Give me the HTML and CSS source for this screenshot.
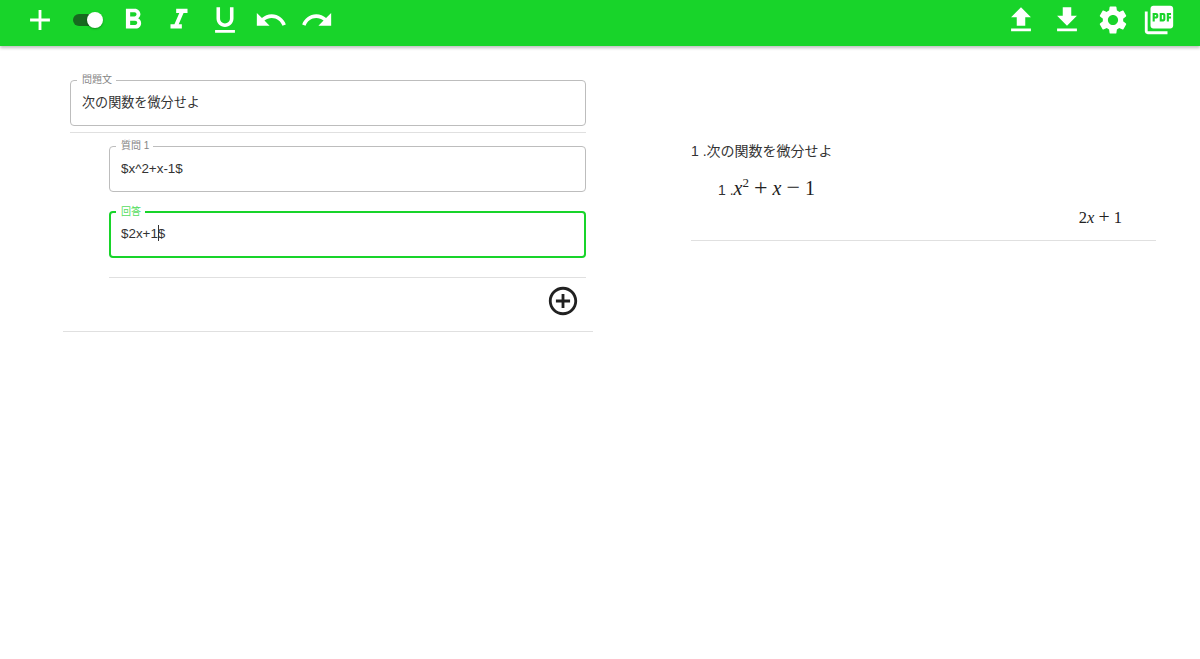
FILE: index.html
```html
<!DOCTYPE html>
<html lang="ja">
<head>
<meta charset="utf-8">
<title>問題エディタ</title>
<link rel="stylesheet" href="styles.css">
</head>
<body>
<header class="toolbar">
  <div class="tool-group">
    <button class="icon-btn"><svg viewBox="0 0 24 24"><path d="M19 13h-6v6h-2v-6H5v-2h6V5h2v6h6v2z"/></svg></button>
    <span class="switch"><span class="switch-track"></span><span class="switch-thumb"></span></span>
    <button class="icon-btn"><svg viewBox="0 0 24 24"><path d="M15.6 10.79c.97-.67 1.65-1.77 1.65-2.79 0-2.26-1.75-4-4-4H7v14h7.04c2.09 0 3.71-1.7 3.71-3.79 0-1.52-.86-2.82-2.15-3.42zM10 6.5h3c.83 0 1.5.67 1.5 1.5s-.67 1.5-1.5 1.5h-3v-3zm3.5 9H10v-3h3.5c.83 0 1.5.67 1.5 1.5s-.67 1.5-1.5 1.5z"/></svg></button>
    <button class="icon-btn"><svg viewBox="0 0 24 24"><path d="M10 4v3h2.21l-3.42 8H6v3h8v-3h-2.21l3.42-8H18V4z"/></svg></button>
    <button class="icon-btn"><svg viewBox="0 0 24 24"><path d="M12 17c3.31 0 6-2.69 6-6V3h-2.5v8c0 1.93-1.57 3.5-3.5 3.5S8.5 12.93 8.5 11V3H6v8c0 3.31 2.69 6 6 6zm-7 2v2h14v-2H5z"/></svg></button>
    <button class="icon-btn"><svg viewBox="0 0 24 24"><path d="M12.5 8c-2.65 0-5.05.99-6.9 2.6L2 7v9h9l-3.62-3.62c1.39-1.16 3.16-1.88 5.12-1.88 3.54 0 6.55 2.31 7.6 5.5l2.37-.78C21.08 11.03 17.15 8 12.5 8z"/></svg></button>
    <button class="icon-btn"><svg viewBox="0 0 24 24"><path d="M18.4 10.6C16.55 8.99 14.15 8 11.5 8c-4.65 0-8.58 3.03-9.96 7.22L3.9 16c1.05-3.19 4.05-5.5 7.6-5.5 1.95 0 3.73.72 5.12 1.88L13 16h9V7l-3.6 3.6z"/></svg></button>
  </div>
  <div class="tool-group">
    <button class="icon-btn"><svg viewBox="0 0 24 24"><path d="M9 16h6v-6h4l-7-7-7 7h4zm-4 2h14v2H5z"/></svg></button>
    <button class="icon-btn"><svg viewBox="0 0 24 24"><path d="M19 9h-4V3H9v6H5l7 7 7-7zM5 18v2h14v-2H5z"/></svg></button>
    <button class="icon-btn"><svg viewBox="0 0 24 24"><path d="M19.14 12.94c.04-.3.06-.61.06-.94 0-.32-.02-.64-.07-.94l2.03-1.58c.18-.14.23-.41.12-.61l-1.92-3.32c-.12-.22-.37-.29-.59-.22l-2.39.96c-.5-.38-1.03-.7-1.62-.94l-.36-2.54c-.04-.24-.24-.41-.48-.41h-3.84c-.24 0-.43.17-.47.41l-.36 2.54c-.59.24-1.13.57-1.62.94l-2.39-.96c-.22-.08-.47 0-.59.22L2.74 8.87c-.12.21-.08.47.12.61l2.03 1.58c-.05.3-.09.63-.09.94s.02.64.07.94l-2.03 1.58c-.18.14-.23.41-.12.61l1.92 3.32c.12.22.37.29.59.22l2.39-.96c.5.38 1.03.7 1.62.94l.36 2.54c.05.24.24.41.48.41h3.84c.24 0 .44-.17.47-.41l.36-2.54c.59-.24 1.13-.56 1.62-.94l2.39.96c.22.08.47 0 .59-.22l1.92-3.32c.12-.22.07-.47-.12-.61l-2.01-1.58zM12 15.6c-1.98 0-3.6-1.62-3.6-3.6s1.62-3.6 3.6-3.6 3.6 1.62 3.6 3.6-1.62 3.6-3.6 3.6z"/></svg></button>
    <button class="icon-btn"><svg viewBox="0 0 24 24"><path d="M20 2H8c-1.1 0-2 .9-2 2v12c0 1.1.9 2 2 2h12c1.1 0 2-.9 2-2V4c0-1.1-.9-2-2-2zm-8.5 7.5c0 .83-.67 1.5-1.5 1.5H9v2H7.5V7H10c.83 0 1.5.67 1.5 1.5v1zm5 2c0 .83-.67 1.5-1.5 1.5h-2.5V7H15c.83 0 1.5.67 1.5 1.5v3zm4-3H19v1h1.5V11H19v2h-1.5V7h3v1.5zM9 9.5h1v-1H9v1zM4 6H2v14c0 1.1.9 2 2 2h14v-2H4V6zm10 5.5h1v-3h-1v3z"/></svg></button>
  </div>
</header>
<main class="page">
  <section class="editor">
    <fieldset class="field">
      <legend>問題文</legend>
      <div class="field-value value-ja">次の関数を微分せよ</div>
    </fieldset>
    <hr class="rule rule-top">
    <div class="sub">
      <fieldset class="field">
        <legend>質問 1</legend>
        <div class="field-value">$x^2+x-1$</div>
      </fieldset>
      <fieldset class="field field-focus">
        <legend>回答</legend>
        <div class="field-value">$2x+1<span class="caret"></span>$</div>
      </fieldset>
      <hr class="rule rule-sub">
      <div class="add-row">
        <button class="icon-btn icon-dark"><svg viewBox="0 0 24 24"><path d="M13 7h-2v4H7v2h4v4h2v-4h4v-2h-4V7zm-1-5C6.48 2 2 6.48 2 12s4.48 10 10 10 10-4.48 10-10S17.52 2 12 2zm0 18c-4.41 0-8-3.59-8-8s3.59-8 8-8 8 3.59 8 8-3.59 8-8 8z"/></svg></button>
      </div>
    </div>
  </section>
  <section class="preview">
    <p class="q-title">1 .次の関数を微分せよ</p>
    <p class="q-sub">1 .<span class="math math-lg"><i>x</i><sup>2</sup> <span class="op">+</span> <i>x</i> <span class="op">−</span> 1</span></p>
    <p class="q-answer"><span class="math">2<i>x</i> <span class="op">+</span> 1</span></p>
  </section>
</main>
</body>
</html>
```
FILE: styles.css
```css
* { box-sizing: border-box; }
html, body { margin: 0; padding: 0; height: 100%; background: #fff; }
body {
  font-family: "Liberation Sans", "Noto Sans CJK JP", sans-serif;
  color: #333;
  font-size: 14px;
  overflow: hidden;
}
.toolbar {
  height: 46px;
  background: #18d42a;
  box-shadow: 0 2px 3px rgba(0,0,0,.25);
  display: flex;
  justify-content: space-between;
  align-items: center;
  padding: 0 18px 0 17px;
}
.tool-group { display: flex; align-items: center; }
.icon-btn {
  width: 46px;
  height: 46px;
  padding: 3px 6px 9px;
  border: 0;
  background: none;
  display: flex;
}
.icon-btn svg { width: 34px; height: 34px; fill: #fff; display: block; }
.icon-dark { padding: 6px; }
.icon-dark svg { fill: #212121; }
.switch {
  position: relative;
  display: block;
  width: 47px;
  height: 46px;
}
.switch-track {
  position: absolute;
  left: 10px;
  top: 14px;
  width: 24px;
  height: 12px;
  border-radius: 6px;
  background: #17691f;
}
.switch-thumb {
  position: absolute;
  left: 24px;
  top: 12px;
  width: 16px;
  height: 16px;
  border-radius: 50%;
  background: #fff;
  box-shadow: 0 1px 2px rgba(0,0,0,.3);
}
.page {
  display: grid;
  grid-template-columns: 530px 465px;
  column-gap: 98px;
  padding-left: 63px;
  align-items: start;
}
.editor {
  padding: 28px 7px 0;
  border-bottom: 1px solid #e0e0e0;
  height: 286px;
}
.field {
  margin: 0;
  padding: 0 11px;
  border: 1px solid #bdbdbd;
  border-radius: 4px;
  height: 52px;
  min-width: 0;
}
.field legend {
  margin-left: -5px;
  padding: 0 4px 0 5px;
  font-size: 10px;
  line-height: 12px;
  color: #858585;
}
.field-value {
  font-size: 13.4px;
  line-height: 20px;
  padding-top: 7px;
  color: #333;
}
.value-ja { font-size: 13.1px; }
.rule { border: 0; border-top: 1px solid #e0e0e0; margin: 0; }
.rule-top { margin-top: 6px; }
.sub { margin-left: 39px; padding-top: 7px; }
.sub .field + .field { margin-top: 14px; }
.field-focus { border: 2px solid #18d42a; padding: 0 10px; }
.field-focus legend { color: #55dd60; }
.field-focus .field-value { padding-top: 6px; }
.caret {
  display: inline-block;
  width: 1px;
  height: 16px;
  margin-right: -1px;
  background: #333;
  vertical-align: -3px;
}
.rule-sub { margin-top: 19px; }
.add-row { display: flex; justify-content: flex-end; }
.preview { padding-top: 95px; border-bottom: 1px solid #e0e0e0; height: 195px; }
.preview p { margin: 0; }
.q-title { font-size: 14px; line-height: 20px; }
.q-sub { font-size: 14px; line-height: 24px; margin: 15px 0 0 27px !important; }
.q-answer { text-align: right; padding-right: 34px; line-height: 24px; margin-top: 4px !important; }
.math { font-family: "Liberation Serif", serif; font-size: 16.5px; color: #222; }
.math-lg { font-size: 20px; }
.math sup { font-size: 13px; line-height: 0; }
.op { font-size: 1.2em; line-height: 0; }
```
